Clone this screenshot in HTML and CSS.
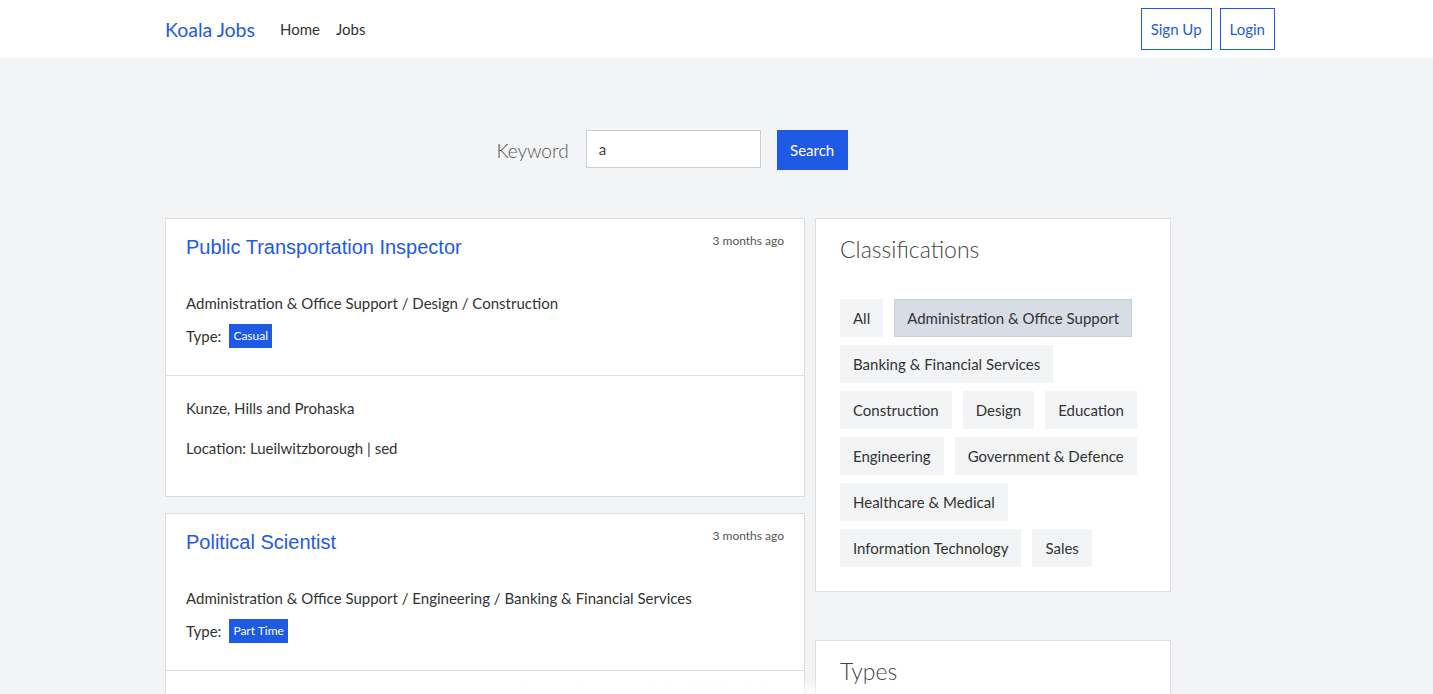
FILE: index.html
```html
<!DOCTYPE html>
<html lang="en">
<head>
<meta charset="utf-8">
<title>Koala Jobs</title>
<link rel="stylesheet" href="styles.css">
</head>
<body>
<header class="navbar">
  <div class="nav-inner">
    <a class="brand" href="#">Koala Jobs</a>
    <nav class="nav-links">
      <a href="#">Home</a>
      <a href="#">Jobs</a>
    </nav>
    <div class="nav-actions">
      <a class="btn-outline" href="#">Sign Up</a>
      <a class="btn-outline" href="#">Login</a>
    </div>
  </div>
</header>

<main class="main">
  <form class="search-row">
    <label class="search-label" for="kw">Keyword</label>
    <input class="search-input" id="kw" type="text" value="a">
    <button class="search-btn" type="button">Search</button>
  </form>

  <div class="layout">
    <section class="jobs">
      <article class="job-card">
        <div class="job-top">
          <div class="job-head">
            <a class="job-title" href="#">Public Transportation Inspector</a>
            <span class="job-time">3 months ago</span>
          </div>
          <p class="job-cats">Administration &amp; Office Support / Design / Construction</p>
          <div class="job-type">Type: <span class="badge">Casual</span></div>
        </div>
        <div class="job-bottom">
          <p>Kunze, Hills and Prohaska</p>
          <p>Location: Lueilwitzborough | sed</p>
        </div>
      </article>

      <article class="job-card">
        <div class="job-top">
          <div class="job-head">
            <a class="job-title" href="#">Political Scientist</a>
            <span class="job-time">3 months ago</span>
          </div>
          <p class="job-cats">Administration &amp; Office Support / Engineering / Banking &amp; Financial Services</p>
          <div class="job-type">Type: <span class="badge">Part Time</span></div>
        </div>
        <div class="job-bottom job-bottom-empty"></div>
      </article>
    </section>

    <aside class="sidebar">
      <div class="side-card">
        <h2 class="side-title">Classifications</h2>
        <div class="tags">
          <a class="tag" href="#">All</a>
          <a class="tag active" href="#">Administration &amp; Office Support</a>
          <a class="tag" href="#">Banking &amp; Financial Services</a>
          <a class="tag" href="#">Construction</a>
          <a class="tag" href="#">Design</a>
          <a class="tag" href="#">Education</a>
          <a class="tag" href="#">Engineering</a>
          <a class="tag" href="#">Government &amp; Defence</a>
          <a class="tag" href="#">Healthcare &amp; Medical</a>
          <a class="tag" href="#">Information Technology</a>
          <a class="tag" href="#">Sales</a>
        </div>
      </div>
      <div class="side-card side-card-types">
        <h2 class="side-title">Types</h2>
      </div>
    </aside>
  </div>
</main>
<div class="fog"></div>
</body>
</html>
```

FILE: styles.css
```css
* { box-sizing: border-box; }

html, body {
  margin: 0;
  padding: 0;
}

body {
  background: #f3f4f6;
  font-family: Lato, "Source Sans Pro", "Liberation Sans", sans-serif;
  font-size: 16px;
  color: #333;
  overflow: hidden;
}

a { text-decoration: none; }

.navbar {
  background: #fff;
  height: 58px;
}

.nav-inner {
  width: 1110px;
  margin-left: 165px;
  height: 58px;
  display: flex;
  align-items: center;
}

.brand {
  color: #1f5ae6;
  font-size: 19.5px;
  margin-right: 25px;
}

.nav-links {
  display: flex;
  gap: 16px;
}

.nav-links a {
  color: #333;
  font-size: 15px;
}

.nav-actions {
  margin-left: auto;
  display: flex;
  gap: 8px;
}

.btn-outline {
  display: flex;
  align-items: center;
  height: 42px;
  padding: 0 9px;
  border: 1px solid #1f5ae6;
  color: #1f5ae6;
  font-size: 15px;
}

.main {
  width: 1006px;
  margin-left: 165px;
}

.search-row {
  display: flex;
  justify-content: center;
  align-items: center;
  margin: 72px 0 48px;
  padding-left: 8px;
  height: 40px;
}

.search-label {
  font-size: 19px;
  font-weight: 300;
  color: #555;
  margin-right: 17px;
}

.search-input {
  width: 175px;
  height: 38px;
  border: 1px solid #ccd0d5;
  padding: 0 12px;
  font-family: inherit;
  font-size: 15px;
  color: #444;
  outline: none;
  margin-top: -2px;
}

.search-btn {
  margin-left: 16px;
  width: 71px;
  height: 40px;
  border: none;
  background: #1f5ae6;
  color: #fff;
  font-family: inherit;
  font-size: 15px;
}

.layout {
  display: grid;
  grid-template-columns: 640px 356px;
  gap: 10px;
  align-items: start;
}

.jobs {
  display: flex;
  flex-direction: column;
  gap: 16px;
}

.job-card {
  background: #fff;
  border: 1px solid #ddd;
}

.job-top {
  padding: 16px 20px 27px;
  border-bottom: 1px solid #ddd;
}

.job-head {
  display: flex;
  justify-content: space-between;
  align-items: flex-start;
}

.job-title {
  font-family: "Liberation Sans", Arial, sans-serif;
  font-size: 20px;
  line-height: 24px;
  color: #1f5ae6;
}

.job-time {
  font-size: 12px;
  line-height: 18px;
  color: #555;
  margin-top: -3px;
}

.job-cats {
  margin: 32px 0 9px;
  font-size: 15px;
  line-height: 24px;
}

.job-type {
  display: flex;
  align-items: center;
  gap: 8px;
  font-size: 15px;
  line-height: 24px;
}

.badge {
  background: #1f5ae6;
  color: #fff;
  font-size: 12px;
  padding: 0 4px;
  line-height: 24px;
}

.job-bottom {
  padding: 20px 20px 20px;
}

.job-bottom-empty {
  height: 120px;
}

.job-bottom p {
  margin: 0 0 16px;
  font-size: 15px;
  line-height: 24px;
}

.sidebar {
  display: flex;
  flex-direction: column;
  gap: 48px;
}

.side-card {
  background: #fff;
  border: 1px solid #ddd;
  padding: 16px 24px 24px;
}

.side-card-types {
  min-height: 160px;
}

.side-title {
  margin: 0 0 35px;
  font-size: 23px;
  line-height: 29px;
  font-weight: 300;
  color: #444;
}

.tags {
  display: flex;
  flex-wrap: wrap;
  gap: 8px 11px;
}

.tag {
  display: flex;
  align-items: center;
  height: 38px;
  padding: 0 13px;
  background: #f3f4f6;
  color: #333;
  font-size: 15px;
}

.tag.active {
  background: #d7dde5;
  border: 1px solid #c9d0d9;
  padding: 0 12px;
}

.fog {
  position: fixed;
  left: 270px;
  right: 290px;
  bottom: -20px;
  height: 36px;
  background: radial-gradient(ellipse at center, rgba(255,255,255,0.9), rgba(255,255,255,0) 70%);
  pointer-events: none;
}
```
